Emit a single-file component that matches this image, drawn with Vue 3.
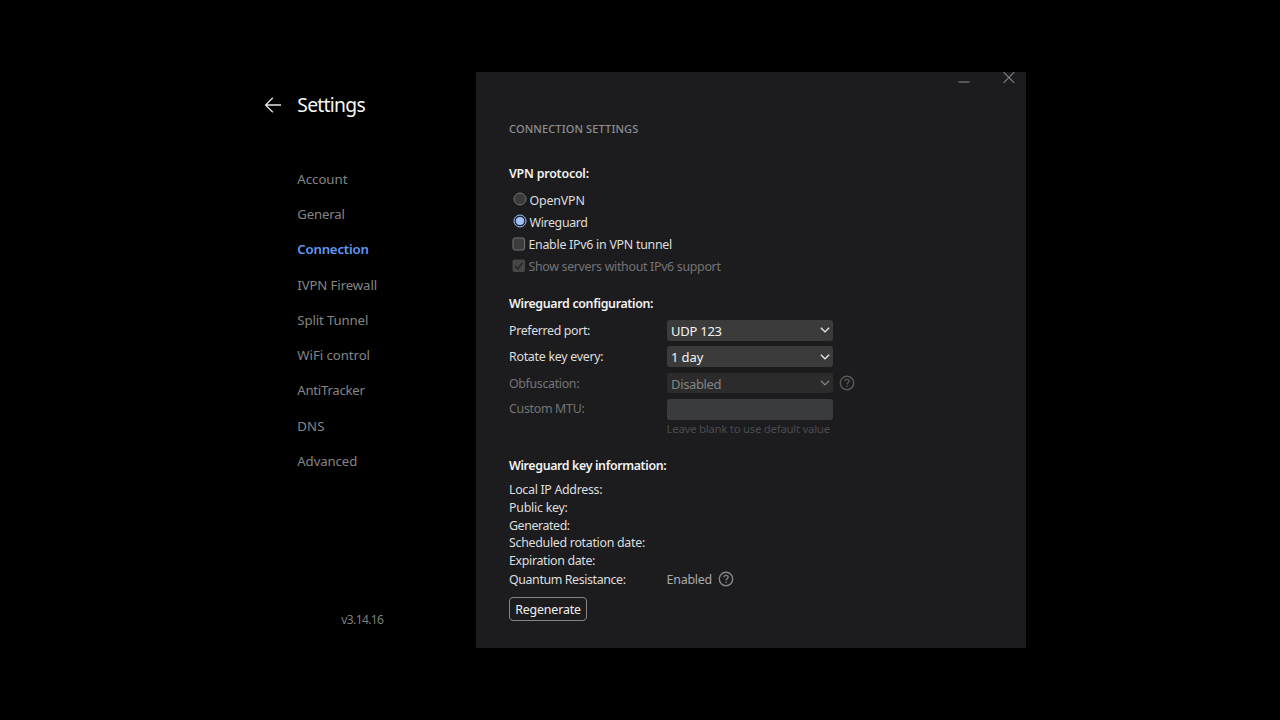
<script setup>
const menu = [
  { label: 'Account', track: 0 },
  { label: 'General', track: -0.15 },
  { label: 'Connection', track: -0.2, active: true },
  { label: 'IVPN Firewall', track: -0.1 },
  { label: 'Split Tunnel', track: -0.12 },
  { label: 'WiFi control', track: -0.04 },
  { label: 'AntiTracker', track: -0.26 },
  { label: 'DNS', track: 0.15 },
  { label: 'Advanced', track: -0.1 },
]

const selects = [
  { label: 'Preferred port:', track: -0.36, value: 'UDP 123', valueTrack: -0.25 },
  { label: 'Rotate key every:', track: -0.27, value: '1 day', valueTrack: -0.1 },
  { label: 'Obfuscation:', track: -0.34, value: 'Disabled', valueTrack: -0.35, disabled: true },
]

const keyInfo = [
  { label: 'Local IP Address:', track: -0.31 },
  { label: 'Public key:', track: -0.24 },
  { label: 'Generated:', track: -0.41 },
  { label: 'Scheduled rotation date:', track: -0.29 },
  { label: 'Expiration date:', track: -0.34 },
]

const spacing = (value) => ({ letterSpacing: value + 'px' })
</script>

<template>
  <div class="screen">
    <div class="window">
      <aside class="sidebar">
        <header class="head">
          <svg class="back" width="18" height="18" viewBox="0 0 18 18">
            <path d="M17 9H1.6M8.8 1.8L1.6 9l7.2 7.2" />
          </svg>
          <h1>Settings</h1>
        </header>
        <nav>
          <div v-for="item in menu" :key="item.label" class="item" :class="{ active: item.active }" :style="spacing(item.track)">{{ item.label }}</div>
        </nav>
        <div class="version">v3.14.16</div>
      </aside>

      <main class="main">
        <div class="titlebar">
          <svg width="58" height="12" viewBox="0 0 58 12">
            <path class="minimize" d="M1.5 10h11" />
            <path class="close" d="M46.6 0.2l10.6 10.6M57.2 0.2L46.6 10.8" />
          </svg>
        </div>

        <div class="content">
          <div class="title">CONNECTION SETTINGS</div>

          <section class="protocol">
            <h2 class="h-protocol">VPN protocol:</h2>
            <div class="choice openvpn">
              <svg width="14" height="14" viewBox="0 0 14 14"><circle class="ring" cx="7" cy="7" r="6" /></svg>
              <span>OpenVPN</span>
            </div>
            <div class="choice wireguard">
              <svg width="14" height="14" viewBox="0 0 14 14">
                <circle class="ring on" cx="7" cy="7" r="6" />
                <circle class="dot" cx="7" cy="7" r="4.1" />
              </svg>
              <span>Wireguard</span>
            </div>
            <div class="choice check ipv6">
              <svg width="14" height="14" viewBox="0 0 14 14"><rect class="ring" x="1" y="1" width="11.6" height="12" rx="1.8" /></svg>
              <span>Enable IPv6 in VPN tunnel</span>
            </div>
            <div class="choice check servers">
              <svg width="14" height="14" viewBox="0 0 14 14">
                <rect class="filled" x="0.5" y="0.5" width="12.6" height="12.6" rx="2" />
                <path class="tick" d="M3.2 7.2l2.5 2.6 4.8-6" />
              </svg>
              <span>Show servers without IPv6 support</span>
            </div>
          </section>

          <section class="config">
            <h2 class="h-config">Wireguard configuration:</h2>
            <div v-for="row in selects" :key="row.label" class="row" :class="{ disabled: row.disabled }">
              <span class="label" :style="spacing(row.track)">{{ row.label }}</span>
              <div class="select">
                <span :style="spacing(row.valueTrack)">{{ row.value }}</span>
                <svg width="10" height="6" viewBox="0 0 10 6"><path d="M0.9 0.8L5 4.9l4.1-4.1" /></svg>
              </div>
              <svg v-if="row.disabled" class="help" width="16" height="16" viewBox="0 0 16 16">
                <circle cx="8" cy="8" r="6.7" />
                <path d="M6 6.3c0-2.6 4.1-2.6 4.1 0 0 1.4-2 1.5-2 3.1M8.1 10.7v1.2" />
              </svg>
            </div>
            <div class="row mtu">
              <span class="label">Custom MTU:</span>
              <div class="input"></div>
            </div>
            <div class="hint">Leave blank to use default value</div>
          </section>

          <section class="keys">
            <h2 class="h-keys">Wireguard key information:</h2>
            <div class="info">
              <div v-for="row in keyInfo" :key="row.label" :style="spacing(row.track)">{{ row.label }}</div>
            </div>
            <div class="quantum">
              <span class="label">Quantum Resistance:</span>
              <span class="enabled">Enabled</span>
              <svg class="help" width="16" height="16" viewBox="0 0 16 16">
                <circle cx="8" cy="8" r="6.7" />
                <path d="M6 6.3c0-2.6 4.1-2.6 4.1 0 0 1.4-2 1.5-2 3.1M8.1 10.7v1.2" />
              </svg>
            </div>
            <button class="regenerate">Regenerate</button>
          </section>
        </div>
      </main>
    </div>
  </div>
</template>

<style>
body {
  background: #000;
}
</style>

<style scoped>
.screen {
  box-sizing: border-box;
  width: 1280px;
  height: 720px;
  padding: 72px 254px;
  overflow: hidden;
  background: #000;
  font: 12.4px/18px "Noto Sans", "Open Sans", sans-serif;
  color: #dedede;
  white-space: nowrap;
}
.screen svg {
  display: block;
  flex: none;
  fill: none;
}
h1, h2 {
  margin: 0;
}
.window {
  display: flex;
  height: 576px;
}
.sidebar {
  display: flex;
  flex-direction: column;
  width: 221.5px;
  flex: none;
}
.head {
  display: flex;
  align-items: center;
  height: 28px;
  padding: 19px 0 0 10px;
}
.back {
  stroke: #e4e4e4;
  stroke-width: 1.3;
}
h1 {
  margin-left: 15.3px;
  font-size: 19.3px;
  line-height: 28px;
  font-weight: 400;
  letter-spacing: -0.72px;
  color: #f8f8f8;
}
nav {
  margin-top: 42.9px;
  padding-left: 43.3px;
}
.item {
  height: 35.25px;
  font-size: 13.2px;
  line-height: 35.25px;
  color: #858585;
}
.item.active {
  font-weight: 600;
  color: #6298f5;
}
.version {
  margin: auto 0 19px 87.3px;
  font-size: 12px;
  letter-spacing: -0.6px;
  color: #7d7d7d;
}
.main {
  width: 550.5px;
  flex: none;
  background: #1c1c1e;
}
.titlebar {
  display: flex;
  justify-content: flex-end;
  height: 48px;
  padding-right: 11px;
}
.minimize {
  stroke: #7c7c7c;
  stroke-width: 1.2;
}
.close {
  stroke: #858585;
  stroke-width: 1.1;
}
.content {
  padding-left: 33.5px;
}
.title {
  font-size: 11px;
  font-weight: 500;
  letter-spacing: 0.13px;
  color: #8e8e90;
}
h2 {
  font-size: 12.4px;
  line-height: 18px;
  font-weight: 600;
  color: #f2f2f2;
}
.h-protocol { letter-spacing: -0.2px; }
.h-config { letter-spacing: -0.33px; }
.h-keys { letter-spacing: -0.36px; }
.protocol {
  height: 130px;
  margin-top: 27px;
}
.choice {
  display: flex;
  align-items: flex-start;
  gap: 2.2px;
  padding-left: 4.3px;
}
.choice.check {
  gap: 2px;
  padding-left: 3.4px;
}
.openvpn { height: 22.4px; margin-top: 9px; letter-spacing: -0.15px; }
.openvpn svg { margin-top: 0; }
.wireguard { height: 21.6px; letter-spacing: -0.36px; }
.wireguard svg { margin-top: 0; }
.ipv6 { height: 22px; letter-spacing: -0.26px; }
.ipv6 svg { margin-top: 1px; }
.servers { letter-spacing: -0.31px; color: #747475; }
.servers svg { margin-top: 1px; }
.ring {
  fill: #3b3b3b;
  stroke: #747474;
  stroke-width: 1;
}
.ring.on {
  fill: #202634;
  stroke: #9fbdf5;
}
.dot { fill: #a4c2fa; }
.filled { fill: #474748; }
.tick {
  stroke: #29292a;
  stroke-width: 1.8;
}
.config {
  height: 162px;
}
.row {
  display: flex;
  align-items: flex-start;
  height: 26.4px;
}
.h-config {
  margin-bottom: 7px;
}
.label {
  width: 157.5px;
  flex: none;
  padding-top: 2px;
}
.select {
  box-sizing: border-box;
  display: flex;
  align-items: center;
  justify-content: space-between;
  width: 166.5px;
  height: 20.6px;
  padding: 0 3.5px 0 4.5px;
  border-radius: 3px;
  background: #3b3b3b;
  font-size: 13px;
  color: #f4f4f4;
}
.select span {
  padding-top: 1px;
}
.select svg {
  stroke: #ededed;
  stroke-width: 1.3;
}
.row.disabled .label, .row.mtu .label {
  color: #747475;
}
.row.disabled .select {
  background: #2b2b2c;
  color: #838384;
}
.row.disabled .select svg {
  stroke: #838384;
}
.help {
  stroke: #59595a;
  stroke-width: 1.4;
}
.row .help {
  margin: 2px 0 0 5.5px;
}
.row.mtu {
  height: 21px;
}
.mtu .label {
  padding-top: 1px;
  letter-spacing: -0.3px;
}
.input {
  width: 166.5px;
  height: 20.6px;
  border-radius: 3px;
  background: #3a3b3f;
}
.hint {
  padding-left: 157.5px;
  font-size: 11.5px;
  letter-spacing: -0.31px;
  color: #494a4e;
}
.info {
  margin-top: 6.3px;
  line-height: 17.65px;
}
.quantum {
  display: flex;
  height: 27.5px;
}
.quantum .label {
  padding-top: 1px;
  letter-spacing: -0.39px;
}
.enabled {
  padding-top: 1px;
  letter-spacing: -0.2px;
  color: #aaaaab;
}
.quantum .help {
  margin: 1px 0 0 6px;
  stroke: #858586;
}
.regenerate {
  display: block;
  box-sizing: border-box;
  width: 78px;
  height: 24px;
  padding: 1px 0 0;
  border: 1px solid #858586;
  border-radius: 4px;
  background: transparent;
  font: 12.4px/21px "Noto Sans", "Open Sans", sans-serif;
  letter-spacing: -0.15px;
  color: #f0f0f0;
}
</style>
